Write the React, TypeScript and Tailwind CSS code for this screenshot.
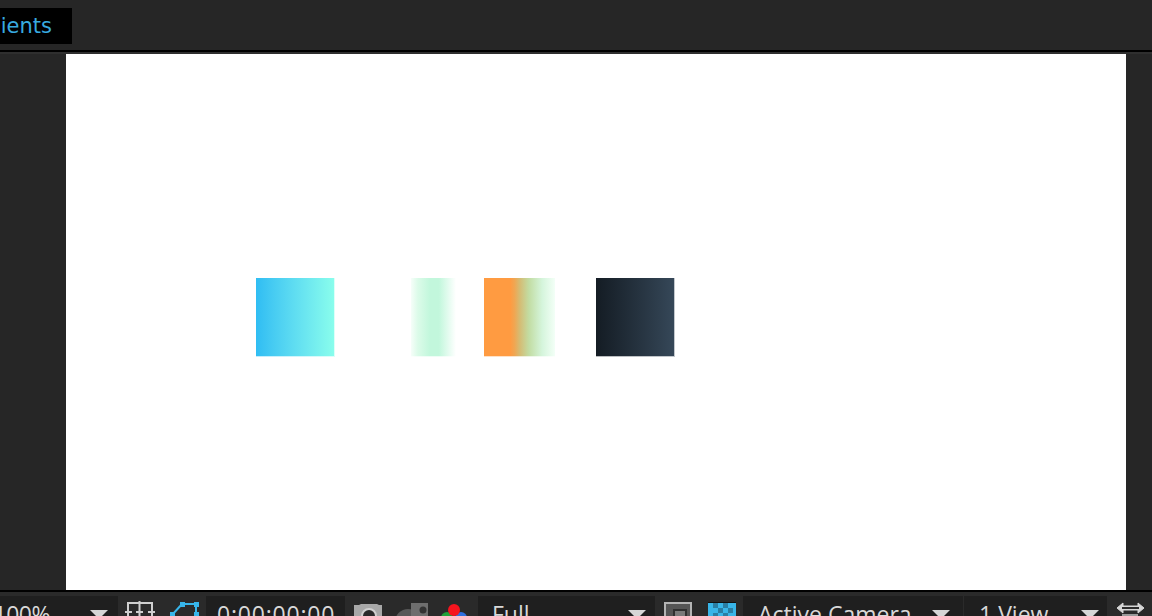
const font = { fontFamily: '"Open Sans", "Liberation Sans", sans-serif' };

function Caret({ className }: { className: string }) {
  return <div className={`absolute top-3.5 h-0 w-0 border-x-[9px] border-t-[9px] border-x-transparent border-t-[#d6d6d6] ${className}`} />;
}

function Swatch({ className }: { className: string }) {
  return <div className={`h-[79px] shrink-0 border-b border-white/70 bg-origin-border ${className}`} />;
}

function Segment({ className, children }: { className: string; children?: React.ReactNode }) {
  return <div className={`relative h-10 shrink-0 bg-[#1f1f1f] pt-[3px] ${className}`}>{children}</div>;
}

export default function App() {
  return (
    <div className="flex h-[616px] w-[1152px] flex-col overflow-hidden bg-[#262626]" style={font}>
      {/* Tab bar */}
      <div className="h-[50px] shrink-0 pt-2">
        <div
          className="flex h-9 w-[72px] items-center justify-end overflow-hidden bg-black pr-5 pt-0.5 text-[21px] text-[#38abe0]"
          style={{ fontFamily: '"DejaVu Sans", sans-serif' }}
        >
          <span className="whitespace-nowrap">Gradients</span>
        </div>
      </div>
      <div className="h-0.5 shrink-0 bg-black" />
      <div className="h-0.5 shrink-0 bg-[#2f2f2f]" />

      {/* Comp viewer */}
      <div className="flex min-h-0 flex-1 pl-[66px] pr-[26px]">
        <div className="flex flex-1 items-start bg-white pl-[190px] pt-[224px]">
          <Swatch className="w-[79px] border-r bg-gradient-to-r from-[#2fbdf3] to-[#8afeec]" />
          <Swatch className="ml-[76px] w-[45px] bg-[linear-gradient(to_right,#f6fef9,#dcfbe9_15%,#c2f7dc_42%,#c2f7dc_62%,#ffffff)]" />
          <Swatch className="ml-7 w-[71px] bg-[linear-gradient(to_right,#ff9b41_37%,#f0a652_43%,#d6bb72_50%,#c2dca2_63%,#d5f5dc_82%,#f3fff7)]" />
          <Swatch className="ml-[41px] w-[79px] border-r bg-gradient-to-r from-[#141c24] to-[#364859]" />
        </div>
      </div>

      {/* Viewer toolbar */}
      <div className="h-0.5 shrink-0 bg-black" />
      <div className="flex h-6 shrink-0 overflow-hidden bg-[#2a2a2a] pt-1 text-[23px] leading-[30px] text-[#d8d8d8]">
        <Segment className="w-[118px]">
          <span className="absolute right-[68px] whitespace-nowrap tracking-[-0.5px]">100%</span>
          <Caret className="left-[90px]" />
        </Segment>
        <div className="h-10 w-[88px] shrink-0">
          {/* Grid and mask toggles */}
          <svg width="88" height="20" viewBox="0 0 88 20" fill="none">
            <path d="M10 20V7h24v13M21.500 5v15M7 16h7M18 16h7M30 16h7" stroke="#cfcfcf" strokeWidth="2" />
            <path d="M54 19 L64 8 H78 V20" stroke="#37b5ea" strokeWidth="2" />
            <path d="M52 16h5v4h-5zM62 6h5v5h-5zM76 6h5v5h-5zM76 16h5v4h-5z" fill="#37b5ea" />
          </svg>
        </div>
        <Segment className="w-[139px] pl-[11px] tracking-[0.8px]">0:00:00:00</Segment>
        <div className="h-10 w-[133px] shrink-0">
          {/* Snapshot and channel buttons */}
          <svg width="133" height="20" viewBox="0 0 133 20" fill="none">
            <path d="M9 24V9h5l2-1h16l2 1h3v15z" fill="#a8a8a8" />
            <circle cx="24" cy="20" r="7" fill="#2a2a2a" stroke="#d0d0d0" strokeWidth="2" />
            <circle cx="63" cy="26" r="13" fill="#585858" />
            <path d="M66 7h17v13H66z" fill="#6e6e6e" />
            <circle cx="78" cy="14" r="3.500" fill="#333" />
            <circle cx="102" cy="22" r="6" fill="#21a038" />
            <circle cx="116" cy="22" r="6" fill="#2f6fe0" />
            <circle cx="109" cy="14" r="6" fill="#f5141e" />
          </svg>
        </div>
        <Segment className="w-[177px] pl-3.5">
          <span>Full</span>
          <Caret className="left-[150px]" />
        </Segment>
        <div className="h-10 w-[88px] shrink-0">
          {/* Region of interest and transparency grid */}
          <svg width="88" height="20" viewBox="0 0 88 20">
            <rect x="10" y="7" width="26" height="26" fill="#555" stroke="#b4b4b4" strokeWidth="2" />
            <rect x="19" y="14" width="12" height="12" fill="#7a7a7a" stroke="#303030" strokeWidth="2" />
            <rect x="53" y="6" width="28" height="14" fill="#38b5e8" />
            <rect x="53" y="6" width="28" height="1" fill="#111" />
            <path d="M58 7h5v5h-5zM68 7h5v5h-5zM63 12h5v5h-5zM73 12h5v5h-5zM58 17h5v3h-5zM68 17h5v3h-5z" fill="#2a7ea3" />
          </svg>
        </div>
        <Segment className="w-[220px] pl-[15px]">
          <span className="whitespace-nowrap">Active Camera</span>
          <Caret className="left-[189px]" />
        </Segment>
        <Segment className="ml-px w-[143px] pl-[15px]">
          <span className="whitespace-nowrap">1 View</span>
          <Caret className="left-[117px]" />
        </Segment>
        <div className="h-10 flex-1">
          {/* Fast previews arrow */}
          <svg width="45" height="20" viewBox="0 0 45 20">
            <path d="M10 12l6-5v3h15V7l6 5-6 5v-3H16v3z" fill="#d6d6d6" stroke="#d6d6d6" strokeWidth="1" />
            <path d="M15 12h17" stroke="#2a2a2a" strokeWidth="2" />
            <rect x="15" y="18" width="16" height="2" fill="#9a9a9a" />
          </svg>
        </div>
      </div>
    </div>
  );
}
